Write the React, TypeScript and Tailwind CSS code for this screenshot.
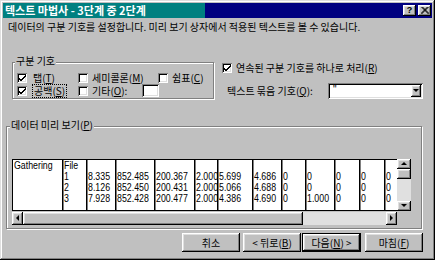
import React from 'react';

const raised =
  'shadow-[inset_-1px_-1px_0_#000,inset_1px_1px_0_#fff,inset_-2px_-2px_0_#808080,inset_2px_2px_0_#dfdfdf]';
const sunken =
  'shadow-[inset_1px_1px_0_#808080,inset_-1px_-1px_0_#fff,inset_2px_2px_0_#000,inset_-2px_-2px_0_#dfdfdf]';
const etched = 'border border-[#808080] shadow-[1px_1px_0_#fff,inset_1px_1px_0_#fff]';

// preview data, column by column
const columns: { w: number; cells: string[] }[] = [
  { w: 49, cells: ['Gathering', '', '', ''] },
  { w: 24, cells: ['File', '1', '2', '3'] },
  { w: 29, cells: ['', '8.335', '8.126', '7.928'] },
  { w: 39, cells: ['', '852.485', '852.450', '852.428'] },
  { w: 40, cells: ['', '200.367', '200.431', '200.477'] },
  { w: 23, cells: ['', '2.000', '2.000', '2.000'] },
  { w: 35, cells: ['', '5.699', '5.066', '4.386'] },
  { w: 29, cells: ['', '4.686', '4.688', '4.690'] },
  { w: 24, cells: ['', '0', '0', '0'] },
  { w: 29, cells: ['', '0', '0', '1.000'] },
  { w: 25, cells: ['', '0', '0', '0'] },
  { w: 25, cells: ['', '0', '0', '0'] },
  { w: 14, cells: ['', '0', '0', '0'] },
];

// accelerator letter
function K({ children }: { children: React.ReactNode }) {
  return <u className="inline-block leading-[12px]">{children}</u>;
}

function CheckBox({ checked }: { checked?: boolean }) {
  return (
    <span className={`relative w-[10px] h-[10px] bg-white shrink-0 ${sunken}`}>
      {checked && (
        <svg className="absolute left-[2px] top-[2px]" width="7" height="7" viewBox="0 0 7 7">
          <path d="M0 3 L2 5 L7 0 M0 4 L2 6 L7 1" stroke="#000" strokeWidth="1" fill="none" />
        </svg>
      )}
    </span>
  );
}

function Arrow({ dir }: { dir: 'up' | 'down' | 'left' | 'right' }) {
  const pts = {
    up: '0,3 3,0 6,3',
    down: '0,0 6,0 3,3',
    left: '3,0 3,6 0,3',
    right: '0,0 0,6 3,3',
  }[dir];
  const vert = dir === 'up' || dir === 'down';
  return (
    <svg width={vert ? 7 : 4} height={vert ? 4 : 7} viewBox={vert ? '0 0 7 4' : '0 0 4 7'}>
      <polygon points={pts} fill="#000" />
    </svg>
  );
}

function Btn({ children, isDefault }: { children: React.ReactNode; isDefault?: boolean }) {
  return (
    <div
      className={`h-[19px] flex items-center justify-center bg-[#c0c0c0] ${
        isDefault ? 'w-[59px] border border-black' : 'w-[58px]'
      } ${raised}`}
    >
      {children}
    </div>
  );
}

export default function App() {
  return (
    <div className="w-[435px] h-[263px] bg-white font-['Noto_Sans_CJK_KR',sans-serif] text-[10px] leading-[12px] text-black">
      <div className="w-[435px] h-[260px] p-[3px] bg-[#c0c0c0] shadow-[inset_-1px_-1px_0_#000,inset_1px_1px_0_#dfdfdf,inset_-2px_-2px_0_#808080,inset_2px_2px_0_#fff]">
        {/* Title bar */}
        <div className="h-[15px] flex items-center justify-between pl-[2px] pr-[1px] bg-[linear-gradient(to_right,#008080_202px,#000080_202px)]">
          <span className="text-white font-bold text-[11px] leading-[15px]">텍스트 마법사 - 3단계 중 2단계</span>
          <div className="flex gap-[2px]">
            <div className={`w-[13px] h-[11px] bg-[#c0c0c0] flex items-center justify-center ${raised}`}>
              <span className="font-['Liberation_Sans',sans-serif] font-bold text-[9px] leading-[9px]">?</span>
            </div>
            <div className={`w-[13px] h-[11px] bg-[#c0c0c0] flex items-center justify-center ${raised}`}>
              <svg width="8" height="7" viewBox="0 0 8 7">
                <path d="M0.5 0 L7.5 7 M1.5 0 L8 6.5 M7.5 0 L0.5 7 M6.5 0 L0 6.5" stroke="#000" strokeWidth="1" />
              </svg>
            </div>
          </div>
        </div>

        {/* Description */}
        <div className="mt-[3px] pl-[5px]">
          데이터의 구분 기호를 설정합니다. 미리 보기 상자에서 적용된 텍스트를 볼 수 있습니다.
        </div>

        {/* Options */}
        <div className="flex mt-[29px] ml-[9px]">
          <div className={`relative w-[202px] h-[37px] ${etched}`}>
            <span className="absolute left-[2px] -top-[8px] px-[1px] bg-[#c0c0c0]">구분 기호</span>
            <div className="pt-[8px] pl-[4px]">
              <div className="flex h-[13px] items-center">
                <div className="w-[61px] flex items-center gap-[6px]">
                  <CheckBox checked />
                  <span>탭(<K>T</K>)</span>
                </div>
                <div className="w-[80px] flex items-center gap-[4px]">
                  <CheckBox />
                  <span>세미콜론(<K>M</K>)</span>
                </div>
                <div className="flex items-center gap-[4px]">
                  <CheckBox />
                  <span>쉼표(<K>C</K>)</span>
                </div>
              </div>
              <div className="flex h-[13px] items-center">
                <div className="w-[61px] flex items-center gap-[5px]">
                  <CheckBox checked />
                  <span className="border border-dotted border-black leading-[11px] pl-[1px] pr-[1px]">공백(<K>S</K>)</span>
                </div>
                <div className="flex items-center gap-[4px]">
                  <CheckBox />
                  <span className="w-[46px]">기타(<K>O</K>):</span>
                  <span className={`w-[17px] h-[13px] bg-white ${sunken}`} />
                </div>
              </div>
            </div>
          </div>

          <div className="ml-[8px] w-[201px]">
            <div className="h-[12px] flex items-center gap-[4px]">
              <CheckBox checked />
              <span>연속된 구분 기호를 하나로 처리(<K>R</K>)</span>
            </div>
            <div className="mt-[9px] h-[16px] flex items-center pl-[5px]">
              <span className="w-[101px]">텍스트 묶음 기호(<K>Q</K>):</span>
              <div className={`w-[95px] h-[16px] bg-white flex justify-between p-[2px] ${sunken}`}>
                <span className="pl-[3px] font-['Liberation_Sans',sans-serif] leading-[10px]">"</span>
                <div className={`w-[10px] h-[12px] bg-[#c0c0c0] flex items-center justify-center ${raised}`}>
                  <Arrow dir="down" />
                </div>
              </div>
            </div>
          </div>
        </div>

        {/* Data preview */}
        <div className={`relative mt-[27px] ml-[3px] w-[416px] h-[103px] ${etched}`}>
          <span className="absolute left-[3px] -top-[8px] px-[1px] bg-[#c0c0c0]">
            데이터 미리 보기(<K>P</K>)
          </span>
          <div className="pt-[32px] pl-[5px]">
            <div className="flex h-[52px]">
              <div className="w-[385px] flex bg-white border-t border-l border-b border-black overflow-hidden font-['Liberation_Sans',sans-serif] text-[11px]">
                {columns.map((c, i) => (
                  <div
                    key={i}
                    className={`shrink-0 pl-[1px] ${i > 0 ? 'border-l border-[#000] shadow-[inset_1px_0_0_#808080]' : ''}`}
                    style={{ width: c.w }}
                  >
                    {c.cells.map((t, j) => (
                      <div key={j} className="h-[11px] leading-[11px] whitespace-nowrap">
                        <span className="inline-block origin-left scale-x-[0.8]">{t}</span>
                      </div>
                    ))}
                  </div>
                ))}
              </div>
              <div className="w-[14px] flex flex-col">
                <div className={`h-[10px] bg-[#c0c0c0] flex items-center justify-center ${raised}`}>
                  <Arrow dir="up" />
                </div>
                <div className={`h-[10px] bg-[#c0c0c0] ${raised}`} />
                <div className="flex-1 bg-[#e0e0e0]" />
                <div className={`h-[10px] bg-[#c0c0c0] flex items-center justify-center ${raised}`}>
                  <Arrow dir="down" />
                </div>
              </div>
            </div>
            <div className="mt-[1px] w-[385px] h-[13px] flex">
              <div className={`w-[11px] bg-[#c0c0c0] flex items-center justify-center ${raised}`}>
                <Arrow dir="left" />
              </div>
              <div className={`w-[280px] bg-[#c0c0c0] ${raised}`} />
              <div className="flex-1 bg-[#e0e0e0]" />
              <div className={`w-[11px] bg-[#c0c0c0] flex items-center justify-center ${raised}`}>
                <Arrow dir="right" />
              </div>
            </div>
          </div>
        </div>

        {/* Buttons */}
        <div className="mt-[4px] ml-[179px] flex">
          <Btn>취소</Btn>
          <div className="ml-[3px]">
            <Btn>&lt; 뒤로(<K>B</K>)</Btn>
          </div>
          <div className="ml-[1px]">
            <Btn isDefault>다음(<K>N</K>) &gt;</Btn>
          </div>
          <div className="ml-[4px]">
            <Btn>마침(<K>F</K>)</Btn>
          </div>
        </div>
      </div>
    </div>
  );
}
